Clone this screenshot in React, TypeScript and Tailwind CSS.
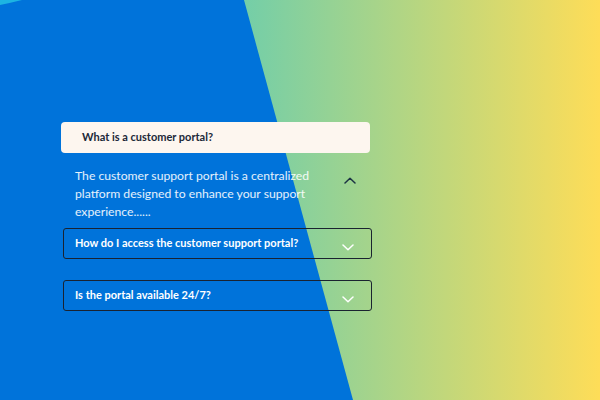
import { useState } from 'react';

interface FaqItem {
  question: string;
  answer: string;
}

const faqs: FaqItem[] = [
  {
    question: 'What is a customer portal?',
    answer:
      'The customer support portal is a centralized platform designed to enhance your support experience......',
  },
  {
    question: 'How do I access the customer support portal?',
    answer: 'Sign in with the email address linked to your account.',
  },
  {
    question: 'Is the portal available 24/7?',
    answer: 'Yes, the portal can be reached at any time of day.',
  },
];

function Chevron({ up, className }: { up?: boolean; className?: string }) {
  return (
    <svg width="12" height="7" viewBox="0 0 12 7" fill="none" className={className}>
      <path
        d={up ? 'M1 6L6 1.2L11 6' : 'M1 1L6 5.8L11 1'}
        stroke="currentColor"
        strokeWidth="1.5"
        strokeLinecap="round"
        strokeLinejoin="round"
      />
    </svg>
  );
}

export default function App() {
  const [open, setOpen] = useState(0);

  return (
    <div
      className="relative w-[600px] h-[400px] overflow-hidden bg-[linear-gradient(90deg,#72cea9_40%,#b8d680_70%,#fedd58_100%)]"
      style={{ fontFamily: 'Lato, "Liberation Sans", sans-serif' }}
    >
      {/* Blue slanted panel + corner swoosh */}
      <svg className="absolute inset-0" width="600" height="400" viewBox="0 0 600 400">
        <polygon points="0,0 244,0 353,400 0,400" fill="#0073da" />
        <path d="M0 0 L22 0 Q10 3 0 5 Z" fill="#1db4e2" />
      </svg>

      <div className="relative flex flex-col pt-[122px] pl-[61px] w-[372px]">
        {faqs.map((f, i) => {
          const isOpen = open === i;
          if (isOpen) {
            return (
              <div key={i} className="flex flex-col">
                <button
                  onClick={() => setOpen(-1)}
                  className="h-[31px] w-[309px] rounded-[4px] bg-[#fdf6ef] pl-[21px] text-left text-[11px] font-bold text-[#1b2838]"
                >
                  {f.question}
                </button>
                <div className="flex items-start pl-[14px] pt-[14px] pr-[16px]">
                  <p className="w-[242px] text-[12.2px] leading-[18px] text-white/90">{f.answer}</p>
                  <Chevron up className="ml-auto mt-[10px] text-[#1c3344]" />
                </div>
              </div>
            );
          }
          return (
            <button
              key={i}
              onClick={() => setOpen(i)}
              className={
                'ml-[2px] flex h-[31px] w-[309px] items-start rounded-[3px] border border-[#1a2330] pl-[11px] pr-[17px] pt-[6px] text-left ' +
                (i === 1 ? 'mt-[7px]' : 'mt-[21px]')
              }
            >
              <span className="text-[11px] font-bold text-white">{f.question}</span>
              <Chevron className="ml-auto mt-[9px] text-white" />
            </button>
          );
        })}
      </div>
    </div>
  );
}
